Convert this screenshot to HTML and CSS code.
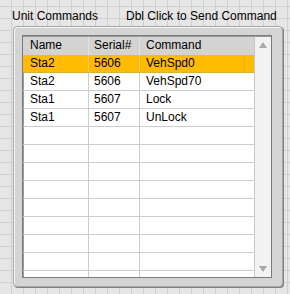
FILE: index.html
```html
<!DOCTYPE html>
<html lang="en">
<head>
    <meta charset="UTF-8">
    <title>Unit Commands</title>
    <link rel="stylesheet" href="styles.css">
</head>
<body>
    <div class="labels">
        <span class="lbl-left">Unit Commands</span>
        <span class="lbl-right">Dbl Click to Send Command</span>
    </div>
    <div class="frame">
        <div class="listbox">
            <div class="table">
                <div class="row head">
                    <div class="c1">Name</div>
                    <div class="c2">Serial#</div>
                    <div class="c3">Command</div>
                </div>
                <div class="row sel">
                    <div class="c1">Sta2</div>
                    <div class="c2">5606</div>
                    <div class="c3">VehSpd0</div>
                </div>
                <div class="row">
                    <div class="c1">Sta2</div>
                    <div class="c2">5606</div>
                    <div class="c3">VehSpd70</div>
                </div>
                <div class="row">
                    <div class="c1">Sta1</div>
                    <div class="c2">5607</div>
                    <div class="c3">Lock</div>
                </div>
                <div class="row">
                    <div class="c1">Sta1</div>
                    <div class="c2">5607</div>
                    <div class="c3">UnLock</div>
                </div>
                <div class="row"><div class="c1"></div><div class="c2"></div><div class="c3"></div></div>
                <div class="row"><div class="c1"></div><div class="c2"></div><div class="c3"></div></div>
                <div class="row"><div class="c1"></div><div class="c2"></div><div class="c3"></div></div>
                <div class="row"><div class="c1"></div><div class="c2"></div><div class="c3"></div></div>
                <div class="row"><div class="c1"></div><div class="c2"></div><div class="c3"></div></div>
                <div class="row"><div class="c1"></div><div class="c2"></div><div class="c3"></div></div>
                <div class="row"><div class="c1"></div><div class="c2"></div><div class="c3"></div></div>
                <div class="row"><div class="c1"></div><div class="c2"></div><div class="c3"></div></div>
                <div class="row"><div class="c1"></div><div class="c2"></div><div class="c3"></div></div>
            </div>
            <div class="scroll">
                <span class="arrow up"></span>
                <span class="arrow down"></span>
            </div>
        </div>
    </div>
</body>
</html>
```

FILE: styles.css
```css
body {
    margin: 0;
    width: 290px;
    height: 294px;
    overflow: hidden;
    font-family: "Liberation Sans", Arial, sans-serif;
    font-size: 12px;
    color: #000;
    background-color: #e6e6e6;
    background-image:
        linear-gradient(to right, #d0d0d0 1px, transparent 1px),
        linear-gradient(to bottom, #d0d0d0 1px, transparent 1px);
    background-size: 12px 12px;
    background-position: 11px 6px;
}
.labels {
    display: flex;
    height: 26px;
    padding-left: 12px;
    line-height: 14px;
    padding-top: 9px;
    box-sizing: border-box;
}
.lbl-right {
    margin-left: 28px;
}
.frame {
    margin-left: 13px;
    width: 270px;
    height: 261px;
    box-sizing: border-box;
    background: #d4d4d4;
    border: 1px solid #a8a8a8;
    border-radius: 4px;
    box-shadow: inset 1px 1px 0 #f6f6f6, 1px 1px 0 #808080;
    padding: 8px 10px 8px 8px;
}
.listbox {
    display: flex;
    height: 100%;
    box-sizing: border-box;
    border: 1px solid #7a7a7a;
    box-shadow: inset 1px 1px 0 #9a9a9a;
    padding: 1px 0 0 0;
    background: #fff;
    overflow: hidden;
}
.table {
    flex: 1;
    overflow: hidden;
}
.row {
    display: grid;
    grid-template-columns: 66px 51px 1fr;
    height: 18px;
    box-sizing: border-box;
    border-bottom: 1px solid #cdcdcd;
    line-height: 17px;
}
.row > div {
    border-right: 1px solid #cdcdcd;
    white-space: nowrap;
}
.row > .c3 {
    border-right: 0;
}
.c1 { padding-left: 7px; }
.c2 { padding-left: 5px; }
.c3 { padding-left: 6px; }
.head {
    background: #d3d3d3;
    border-bottom: 0;
}
.head > div {
    border-right-color: #e2e2e2;
}
.sel {
    background: #ffbb00;
    border-bottom-color: #d8b040;
}
.sel > div {
    border-right-color: #f0d070;
}
.scroll {
    width: 16px;
    background: #f2f2f2;
    border-left: 1px solid #c8c8c8;
    display: flex;
    flex-direction: column;
    justify-content: space-between;
    align-items: center;
    padding: 5px 0 5px 0;
}
.arrow {
    width: 0;
    height: 0;
    border-left: 4px solid transparent;
    border-right: 4px solid transparent;
}
.up {
    border-bottom: 6px solid #a8a8a8;
}
.down {
    border-top: 6px solid #a8a8a8;
}
```
